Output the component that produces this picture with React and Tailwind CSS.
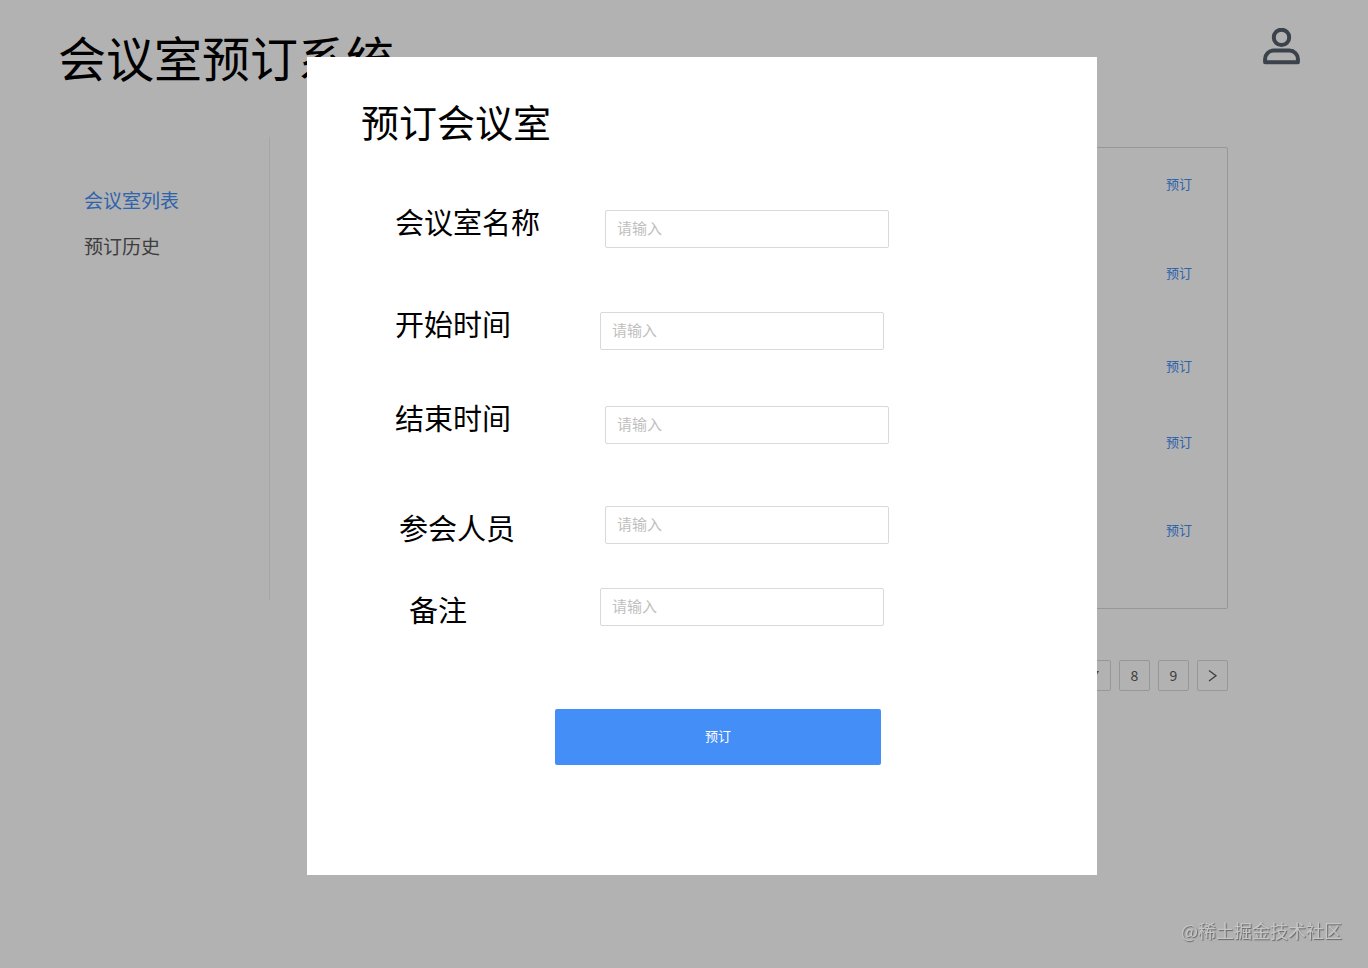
import React, { useState } from "react";

const menuItems = [
  { name: "会议室列表", active: true },
  { name: "预订历史", active: false },
];

const rooms = [
  { id: 1, rowClass: "mt-0" },
  { id: 2, rowClass: "mt-[69px]" },
  { id: 3, rowClass: "mt-[73px]" },
  { id: 4, rowClass: "mt-14" },
  { id: 5, rowClass: "mt-[68px]" },
];

const pages = [7, 8, 9];

const fields = [
  {
    name: "roomName",
    label: "会议室名称",
    rowClass: "mt-[62px] items-start",
    labelClass: "w-[298px] pl-[88px]",
  },
  {
    name: "startTime",
    label: "开始时间",
    rowClass: "mt-16 items-start",
    labelClass: "w-[293px] pl-[88px]",
  },
  {
    name: "endTime",
    label: "结束时间",
    rowClass: "mt-14 items-start",
    labelClass: "w-[298px] pl-[88px]",
  },
  {
    name: "attendees",
    label: "参会人员",
    rowClass: "mt-[62px] items-end",
    labelClass: "w-[298px] pl-[92px] pb-1.5",
  },
  {
    name: "note",
    label: "备注",
    rowClass: "mt-11 items-end",
    labelClass: "w-[293px] pl-[102px] pb-1.5",
  },
];

const UserIcon = () => (
  <svg
    width="38"
    height="38"
    viewBox="0 0 38 38"
    fill="none"
    stroke="#555f6d"
    strokeWidth="4"
    strokeLinejoin="round"
  >
    <circle cx="18.5" cy="9.4" r="7.7" />
    <path d="M2.1 34.2V31a8.4 8.4 0 0 1 8.4-8.4h16a8.4 8.4 0 0 1 8.4 8.4v3.2z" />
  </svg>
);

const Header = () => (
  <header className="flex items-start justify-between pt-7 pl-[58px] pr-[67px]">
    <h1 className="h-16 text-5xl leading-[56px] text-black">会议室预订系统</h1>
    <button type="button" aria-label="用户">
      <UserIcon />
    </button>
  </header>
);

const Sidebar = () => (
  <nav className="w-[270px] h-[463px] shrink-0 border-r border-[#ededed] pt-10 pl-[84px]">
    {menuItems.map((item) => (
      <a
        key={item.name}
        href="#"
        className={`block text-[19px] leading-[46px] ${
          item.active ? "text-[#448ef7]" : "text-[#595959]"
        }`}
      >
        {item.name}
      </a>
    ))}
  </nav>
);

const RoomList = () => (
  <section className="grow pt-[10px] pl-12 pr-[140px]">
    <ul className="border border-[#d9d9d9] rounded-xs pt-[26px] pb-[68px] pr-[35px]">
      {rooms.map((room) => (
        <li key={room.id} className={`flex justify-end ${room.rowClass}`}>
          <button type="button" className="text-[13px] leading-5 text-[#448ef7]">
            预订
          </button>
        </li>
      ))}
    </ul>

    <div className="flex justify-end gap-2 mt-[51px]">
      {pages.map((page) => (
        <button
          key={page}
          type="button"
          className="size-[31px] pb-0.5 border border-[#d9d9d9] rounded-xs text-sm text-[#595959]"
        >
          {page}
        </button>
      ))}
      <button
        type="button"
        aria-label="下一页"
        className="size-[31px] flex items-center justify-center border border-[#d9d9d9] rounded-xs text-[#595959]"
      >
        <svg width="10" height="14" viewBox="0 0 10 14" fill="none" stroke="currentColor" strokeWidth="1.3">
          <path d="M1 1.5L8 6.8L1 12" />
        </svg>
      </button>
    </div>
  </section>
);

const BookingModal = () => {
  const [form, setForm] = useState({
    roomName: "",
    startTime: "",
    endTime: "",
    attendees: "",
    note: "",
  });

  const handleChange = (e) => {
    setForm({ ...form, [e.target.name]: e.target.value });
  };

  return (
    <div className="fixed inset-0 overflow-auto bg-black/30 flex items-start justify-center pt-[57px] pl-9">
      <form
        role="dialog"
        aria-labelledby="booking-title"
        onSubmit={(e) => e.preventDefault()}
        className="w-full max-w-[790px] bg-white pt-10 pb-[110px]"
      >
        <h2 id="booking-title" className="pl-[54px] pb-[3px] text-[38px] leading-[48px] text-black">
          预订会议室
        </h2>

        {fields.map((field) => (
          <div key={field.name} className={`flex ${field.rowClass}`}>
            <label
              htmlFor={field.name}
              className={`shrink-0 text-[29px] leading-[22px] text-black ${field.labelClass}`}
            >
              {field.label}
            </label>
            <input
              id={field.name}
              name={field.name}
              type="text"
              value={form[field.name]}
              onChange={handleChange}
              placeholder="请输入"
              className="w-[284px] h-[38px] px-[11px] pb-1 border border-[#d9d9d9] rounded-xs text-[15px] text-[#595959] placeholder:text-[#bfbfbf]"
            />
          </div>
        ))}

        <button
          type="submit"
          className="block w-[326px] h-14 mt-[83px] ml-[248px] pb-0.5 bg-[#448ef7] rounded-xs text-[13px] text-white"
        >
          预订
        </button>
      </form>
    </div>
  );
};

const App = () => {
  return (
    <div className="min-h-screen bg-white font-['Noto_Sans_CJK_SC',sans-serif]">
      <Header />
      <main className="flex pt-[45px]">
        <Sidebar />
        <RoomList />
      </main>
      <BookingModal />
      <p className="fixed right-[26px] bottom-[26px] text-lg leading-6 text-[#c6c6c6] [text-shadow:1px_1px_1px_#666666]">
        @稀土掘金技术社区
      </p>
    </div>
  );
};

export default App;
